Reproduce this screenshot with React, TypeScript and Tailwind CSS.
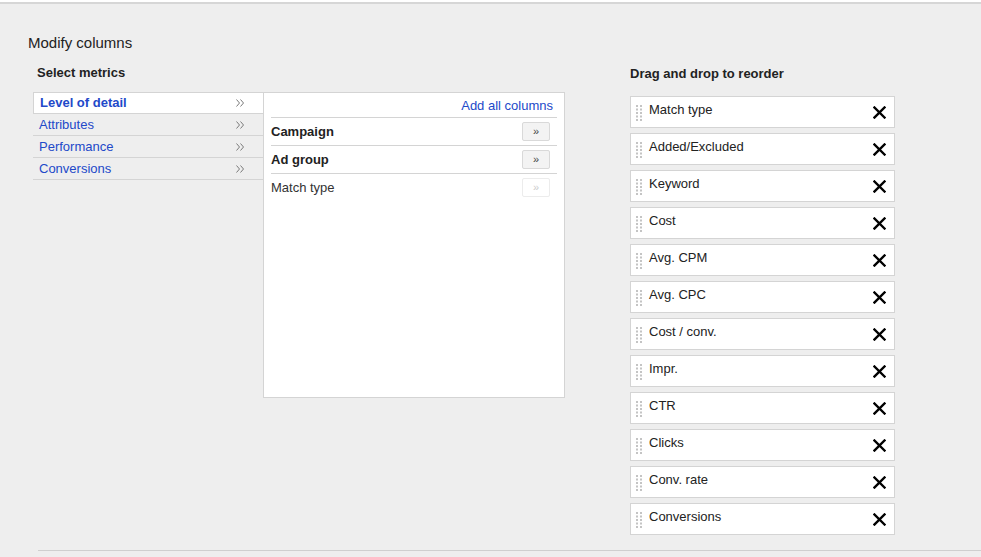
import * as React from "react"

/* Modify columns dialog: metric picker on the left, reorderable column list on the right. */

const categories = [
  { label: "Level of detail", active: true },
  { label: "Attributes" },
  { label: "Performance" },
  { label: "Conversions" },
]

const options = [
  { label: "Campaign", bold: true },
  { label: "Ad group", bold: true },
  { label: "Match type", disabled: true },
]

const selected = [
  "Match type",
  "Added/Excluded",
  "Keyword",
  "Cost",
  "Avg. CPM",
  "Avg. CPC",
  "Cost / conv.",
  "Impr.",
  "CTR",
  "Clicks",
  "Conv. rate",
  "Conversions",
]

function DragHandle() {
  return (
    <svg width="6" height="16" viewBox="0 0 6 16" className="shrink-0">
      {[0, 1, 2, 3, 4].map((r) =>
        [0, 1].map((c) => (
          <rect key={`${r}-${c}`} x={c * 4} y={r * 3.5} width="2" height="2" fill="#c4c4c4" />
        ))
      )}
    </svg>
  )
}

function CloseX() {
  return (
    <svg width="13" height="13" viewBox="0 0 13 13" className="shrink-0">
      <path d="M1.5 1.5 L11.5 11.5 M11.5 1.5 L1.5 11.5" stroke="#000" strokeWidth="2.4" strokeLinecap="square" />
    </svg>
  )
}

function Chevrons() {
  return (
    <svg width="9" height="8" viewBox="0 0 9 8" className="shrink-0">
      <path d="M0.5 0.5 L3.5 4 L0.5 7.5 M4.5 0.5 L7.5 4 L4.5 7.5" fill="none" stroke="#7a7a7a" strokeWidth="1" />
    </svg>
  )
}

function AddButton({ disabled }: { disabled?: boolean }) {
  return (
    <span
      className={
        disabled
          ? "flex h-[19px] w-[28px] items-center justify-center rounded-[2px] border border-[#ececec] bg-white text-[11px] font-normal leading-none text-[#cccccc]"
          : "flex h-[19px] w-[28px] items-center justify-center rounded-[2px] border border-[#d9d9d9] bg-[#f3f3f3] text-[11px] font-normal leading-none text-[#444]"
      }
    >
      »
    </span>
  )
}

export default function App() {
  return (
    <div
      className="h-[557px] w-[981px] overflow-hidden bg-white text-[13px] text-[#222]"
      style={{ fontFamily: '"Liberation Sans", Arial, sans-serif' }}
    >
      <div className="h-[2px] bg-white" />
      <div className="h-[555px] border-t-2 border-[#d6d6d6] bg-[#eeeeee]">
        <div className="pl-[28px] pt-[30px] text-[15px] leading-[18px] text-[#222]">Modify columns</div>

        <div className="flex pt-[13px]">
          {/* left: category list + option panel */}
          <div className="w-[600px] pl-[33px]">
            <div className="pl-[4px] text-[13px] font-bold leading-[16px] text-[#222]">Select metrics</div>
            <div className="mt-[11px] flex">
              <div className="w-[230px]">
                {categories.map((c) =>
                  c.active ? (
                    <div
                      key={c.label}
                      className="flex h-[22px] items-center justify-between border border-r-0 border-[#d4d4d4] bg-white pl-[6px] pr-[18px] font-bold text-[#2249c9]"
                    >
                      <span>{c.label}</span>
                      <Chevrons />
                    </div>
                  ) : (
                    <div
                      key={c.label}
                      className="flex h-[22px] items-center justify-between border-b border-[#d4d4d4] pl-[6px] pr-[18px] text-[#2249c9]"
                    >
                      <span>{c.label}</span>
                      <Chevrons />
                    </div>
                  )
                )}
              </div>
              <div className="h-[306px] w-[302px] border border-[#d4d4d4] bg-white px-[7px]">
                <div className="flex h-[24px] items-center justify-end pr-[4px] pt-[1px] text-[#2249c9]">Add all columns</div>
                {options.map((o) => (
                  <div
                    key={o.label}
                    className={`flex h-[28px] items-center justify-between border-t border-[#d4d4d4] pr-[7px] ${o.bold ? "font-bold text-[#222]" : "text-[#333]"}`}
                  >
                    <span>{o.label}</span>
                    <AddButton disabled={o.disabled} />
                  </div>
                ))}
              </div>
            </div>
          </div>

          {/* right: selected columns */}
          <div className="pl-[30px]">
            <div className="pt-[1px] text-[13px] font-bold leading-[16px] text-[#222]">Drag and drop to reorder</div>
            <div className="mt-[14px] flex flex-col gap-[5px]">
              {selected.map((s) => (
                <div
                  key={s}
                  className="flex h-[32px] w-[265px] items-start border border-[#d4d4d4] bg-white pl-[5px] pr-[8px]"
                >
                  <span className="pt-[8px]">
                    <DragHandle />
                  </span>
                  <span className="flex-1 pl-[7px] pt-[5px] leading-[16px] text-[#222]">{s}</span>
                  <span className="pt-[9px]">
                    <CloseX />
                  </span>
                </div>
              ))}
            </div>
          </div>
        </div>

        <div className="ml-[38px] mt-[15px] h-px bg-[#cfcfcf]" />
      </div>
    </div>
  )
}
